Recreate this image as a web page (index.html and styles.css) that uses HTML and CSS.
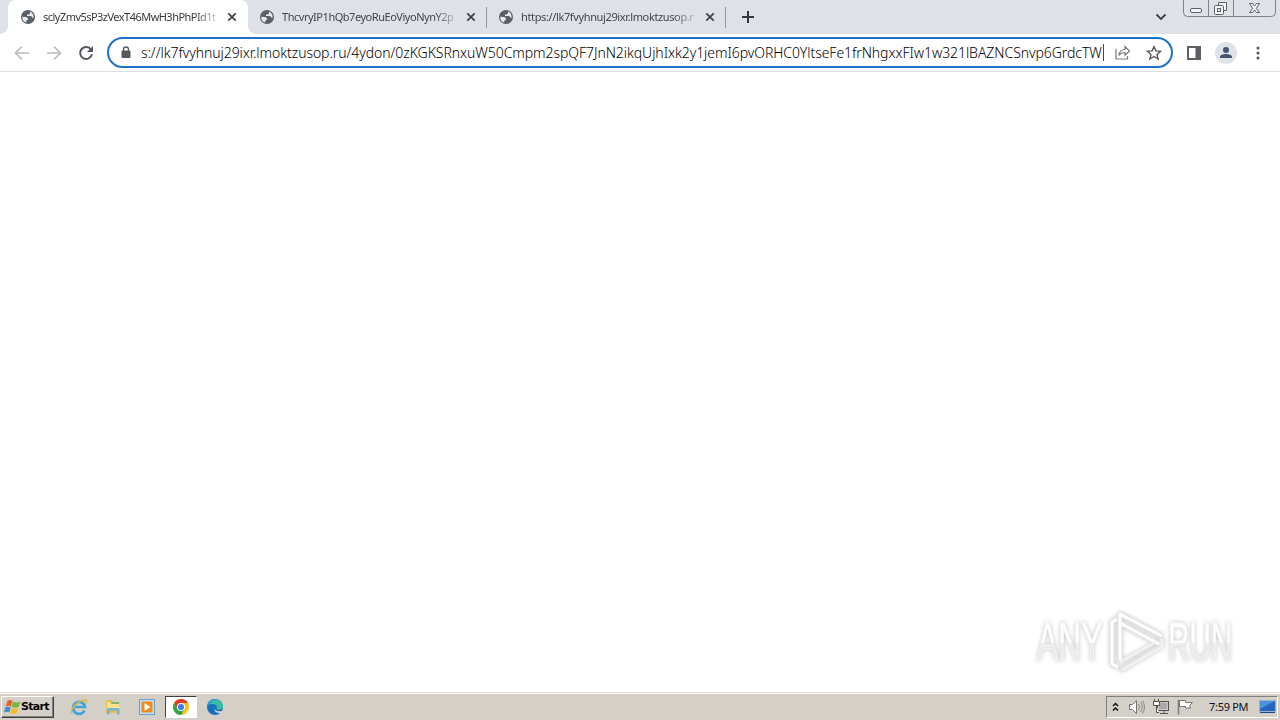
FILE: index.html
```html
<!DOCTYPE html>
<html lang="en">
<head>
  <meta charset="UTF-8">
  <title>Browser</title>
  <link rel="stylesheet" href="styles.css">
</head>
<body>
  <svg class="defs" width="0" height="0">
    <symbol id="globe" viewBox="0 0 16 16">
      <circle cx="8" cy="8" r="7" fill="#5b5f66"/>
      <path d="M2.3 7.8l3.4.2c1.8.1 2.2 1 2.2 2.500v.8H6.300v2.300C3.600 13 2 10.600 2.300 7.800zM10 2.600v1.500c0 .8-.7 1.500-1.500 1.500H7v1.500H10.300c1.300 0 2 .8 2 1.700h1.300C13.900 6 12.400 3.500 10 2.600z" fill="#e9ebee"/>
    </symbol>
    <symbol id="cross" viewBox="0 0 10 10">
      <path d="M1.300 1.300l7.400 7.400M8.700 1.300L1.300 8.700" stroke="#3c4043" stroke-width="1.700"/>
    </symbol>
  </svg>

  <header class="tabstrip">
    <div class="tab active">
      <svg class="favicon"><use href="#globe"/></svg>
      <span class="title t1">sclyZmv5sP3zVexT46MwH3hPhPId1t</span>
      <svg class="close"><use href="#cross"/></svg>
    </div>
    <div class="tab">
      <svg class="favicon"><use href="#globe"/></svg>
      <span class="title t2">ThcvryIP1hQb7eyoRuEoViyoNynY2p</span>
      <svg class="close"><use href="#cross"/></svg>
    </div>
    <div class="tab">
      <svg class="favicon"><use href="#globe"/></svg>
      <span class="title t3">https://lk7fvyhnuj29ixr.lmoktzusop.r</span>
      <svg class="close"><use href="#cross"/></svg>
    </div>
    <svg class="plus" width="12" height="12"><path d="M6 0v12M0 6h12" stroke="#33363b" stroke-width="2"/></svg>
    <svg class="chevron" width="12" height="8"><path d="M1.500 1.500L6 6l4.500-4.500" fill="none" stroke="#3c4043" stroke-width="1.800"/></svg>
    <svg class="controls" width="94" height="18" fill="none" stroke="#7f8389">
      <path d="M.5 0v12.500q0 4 4 4h84q4 0 4-4V0M25.500 0v16M50.500 0v16"/>
      <g stroke="#5d6167">
        <rect x="7.500" y="8.500" width="11" height="4" rx="1.500" fill="#f4f5f7"/>
        <path d="M35.500 5V2.500h8v8H41" fill="#f4f5f7"/>
        <rect x="31.500" y="5.500" width="9" height="9" rx="1" fill="#f4f5f7"/>
        <rect x="34.500" y="8.500" width="3" height="3"/>
        <path d="M66.500 3.500h3l2 2.500 2-2.500h3L73.300 8.300l3.200 4.200h-3l-2-2.500-2 2.500h-3l3.200-4.200z" fill="#f4f5f7"/>
      </g>
    </svg>
  </header>

  <nav class="toolbar">
    <svg class="back" width="16" height="16"><path d="M15 8H2M8 1.500L1.500 8 8 14.500" fill="none" stroke="#b9bbbe" stroke-width="1.700"/></svg>
    <svg class="forward" width="16" height="16"><path d="M1 8h13M8 1.500L14.500 8 8 14.500" fill="none" stroke="#b9bbbe" stroke-width="1.700"/></svg>
    <svg class="reload" width="16" height="16"><path d="M13.100 4.600A6 6 0 1 0 14 9.300" fill="none" stroke="#55585d" stroke-width="2"/><path d="M15 1v6H9z" fill="#55585d"/></svg>
    <div class="omnibox">
      <svg class="lock" width="10" height="13"><path d="M2.500 6V3.500a2.500 2.500 0 0 1 5 0V6" fill="none" stroke="#55585d" stroke-width="1.300"/><rect x=".5" y="4.500" width="9" height="7.500" rx="1" fill="#55585d"/></svg>
      <div class="url">s://lk7fvyhnuj29ixr.lmoktzusop.ru/4ydon/0zKGKSRnxuW50Cmpm2spQF7JnN2ikqUjhIxk2y1jemI6pvORHC0YltseFe1frNhgxxFIw1w321lBAZNCSnvp6GrdcTW</div>
      <i class="caret"></i>
      <svg class="share" width="16" height="15" fill="none" stroke="#777a7f" stroke-width="1.200"><path d="M1 4v10h11.500v-3"/><path d="M3.800 10.500c.5-4 2.700-6 6.200-6V1.500L14.500 6 10 10.300V7.500c-2.800 0-4.700.8-6.200 3z"/></svg>
      <svg class="star" width="16" height="16"><path d="M8 1.600l1.900 4.300 4.700.4-3.600 3.100 1.100 4.600L8 11.500 3.900 14 5 9.400 1.400 6.300l4.700-.4z" fill="none" stroke="#55585d" stroke-width="1.400"/></svg>
    </div>
    <svg class="panel" width="14" height="14"><path d="M0 0h14v14H0zM2 2v10h6.500V2z" fill="#5c5f64" fill-rule="evenodd"/></svg>
    <svg class="avatar" width="22" height="22"><circle cx="11" cy="11" r="11" fill="#dfe3e8"/><circle cx="11" cy="8" r="3" fill="#44546f"/><path d="M5 16v-1.200C5 12.800 9 12 11 12s6 .8 6 2.800V16z" fill="#44546f"/></svg>
    <svg class="menu" width="4" height="14" fill="#505358"><circle cx="2" cy="2" r="1.500"/><circle cx="2" cy="7" r="1.500"/><circle cx="2" cy="12" r="1.500"/></svg>
  </nav>

  <main class="page">
    <div class="watermark">
      <span class="any">ANY</span>
      <svg width="58" height="64" viewBox="0 0 58 64" fill="none" stroke-linejoin="round">
        <g stroke="#e3e3e3" stroke-width="5"><path d="M9 9L4 12v42l6 3"/><path d="M12 50V4l42 22M12 13l39 21M12 50V20M12 60l41-24V26"/></g>
        <g stroke="#fff" stroke-width="3"><path d="M9 9L4 12v42l6 3"/><path d="M12 50V4l42 22M12 13l39 21M12 50V20"/></g>
        <path d="M12 52l36-20M14 60l40-23v-8" stroke="#f1f1f1" stroke-width="3"/>
      </svg>
      <span class="run">RUN</span>
    </div>
  </main>

  <footer class="taskbar">
    <div class="start">
      <svg width="17" height="16"><path d="M3.500 2Q6 0 8.500 2L7 7.500Q4 6 1.500 7.400z" fill="#e95f2b"/><path d="M9 2.400Q12.500 4.500 16.500 2.500L14.700 8Q11 9.500 7.700 7.800z" fill="#78b83d"/><path d="M1.300 8.300Q4 7 6.700 8.400L5.300 13.500Q3 12 0 13.500z" fill="#418bd4"/><path d="M7.400 8.900Q10.500 10.500 14.500 9L13 14Q9 16 6 14z" fill="#f3bd29"/></svg>
      <b>Start</b>
    </div>
    <div class="apps">
      <div class="app"><svg width="18" height="18"><path d="M14.500 12.500A6 6 0 1 1 15 9H5" fill="none" stroke="#3fa4df" stroke-width="2.700"/><path d="M2 15.500C-1 12 8 2 15.500 2c2 .5 1 2.500.2 3.500" fill="none" stroke="#e2b63e" stroke-width="1.300"/></svg></div>
      <div class="app"><svg width="18" height="18"><path d="M2 2h6l1 2h6v11H2z" fill="#e4bd50"/><path d="M3 4h12v8H3z" fill="#f8e390"/><path d="M7 5h8" stroke="#58a46b" stroke-width="1.500"/><path d="M3 16.500v-5Q3 10 4.500 10h9.500q1.500 0 1.500 1.500v5H13v-4H5.500v4z" fill="#6fb5dc"/></svg></div>
      <div class="app"><svg width="18" height="18"><rect x="1.500" y="1.500" width="15" height="15" fill="#c5def0" stroke="#6d9fc8"/><rect x="3.500" y="3.500" width="11" height="11" rx="1" fill="#f18a1d"/><path d="M6.500 5v8l6-4z" fill="#fff"/></svg></div>
      <div class="app pressed"><svg width="16" height="16"><circle cx="8" cy="8" r="8" fill="#fbc116"/><path d="M1.070 4A8 8 0 0 1 14.930 4H8L4.540 10z" fill="#e33b2e"/><path d="M1.070 4A8 8 0 0 0 8 16l3.460-6H4.540z" fill="#2da44e"/><circle cx="8" cy="8" r="4" fill="#fff"/><circle cx="8" cy="8" r="3.100" fill="#3b7de9"/></svg></div>
      <div class="app"><svg width="18" height="18"><circle cx="9" cy="9" r="8" fill="#1670c0"/><path d="M1.200 8C3 0 16 -1 17 8c0 4-5 4.500-6.500 3 1.500-2-.5-5-4-5C4 6 2 6.500 1.200 8z" fill="#39bea4"/><path d="M1.200 8C2 3 6 0 10 1.200c-4 1-4 3-8.800 6.800z" fill="#289dd4"/><path d="M9 8.500c-1.500 2 .5 5.500 6.500 4.500l1.300.5-1.300 2C11 15 7 14 9 8.500z" fill="#d6d2cb"/></svg></div>
    </div>
    <div class="tray">
      <svg class="expand" width="7" height="10"><path d="M1 4l2.500-2.500L6 4M1 8.500L3.500 6 6 8.500" fill="none" stroke="#111" stroke-width="1.500"/></svg>
      <svg width="18" height="18" fill="none" stroke="#888"><path d="M1.500 6.500h3l4-4v13l-4-4h-3z" fill="#fafafa" stroke="#77756f"/><path d="M10.500 6q2 3 0 6M12.500 4q3.500 5 0 10M14.500 2.500q4 6.500 0 13"/></svg>
      <svg width="18" height="18"><rect x="5.500" y="3.500" width="11" height="9" fill="#c9c8c5" stroke="#55544f"/><rect x="7" y="5" width="8" height="6" fill="#aaa"/><path d="M8 15.500h8M12 13v2" stroke="#555"/><path d="M2.500 1v3M6.500 1v3M1.500 3.500h6v4h-6zM4.500 7.500v7H7" fill="#f8f8f8" stroke="#55544f"/></svg>
      <svg width="18" height="18"><path d="M2.500 2v14.500" stroke="#777" stroke-width="1.500"/><path d="M3.500 2.500h6v2h7l-3 3 1 2.500H9.500V8.500h-6z" fill="#fff" stroke="#777"/></svg>
      <span class="clock">7:59 PM</span>
      <svg class="desktop" width="17" height="15"><rect x=".5" y="1.500" width="16" height="11" fill="#2466bd" stroke="#95afd1"/><path d="M1 2h15L1 10z" fill="#4e91dc"/><path d="M1 13.500h15" stroke="#1b4682"/></svg>
    </div>
  </footer>
</body>
</html>
```
FILE: styles.css
```css
* {
  box-sizing: border-box;
}
body {
  margin: 0;
  width: 1280px;
  height: 720px;
  overflow: hidden;
  display: flex;
  flex-direction: column;
  background: #fff;
  font-family: "Noto Sans", "DejaVu Sans", sans-serif;
}
svg {
  display: block;
  flex: none;
}
.defs {
  position: absolute;
}
.tabstrip {
  height: 34px;
  flex: none;
  display: flex;
  align-items: flex-start;
  background: #dee1e6;
  padding-left: 8px;
}
.tab {
  width: 239px;
  height: 34px;
  display: flex;
  align-items: center;
  padding: 0 10px 0 11px;
  color: #42464c;
  position: relative;
}
.tab.active {
  width: 240px;
  padding-left: 12px;
  background: #fff;
  border-radius: 8px 8px 0 0;
  color: #35383d;
}
.tab.active::before,
.tab.active::after {
  content: "";
  position: absolute;
  bottom: 0;
  left: -8px;
  width: 8px;
  height: 8px;
  background: radial-gradient(circle at 0 0, transparent 7.5px, #fff 8px);
}
.tab.active::after {
  left: auto;
  right: -8px;
  transform: scaleX(-1);
}
.tab:not(.active) {
  border-right: 1px solid transparent;
  border-image: linear-gradient(transparent 8px, #92969d 8px, #92969d 27px, transparent 27px) 1;
}
.favicon {
  width: 16px;
  height: 16px;
}
.title {
  width: 178px;
  margin-left: 7px;
  white-space: nowrap;
  font-size: 11px;
  line-height: 16px;
  -webkit-mask-image: linear-gradient(90deg, #000 152px, transparent 180px);
  mask-image: linear-gradient(90deg, #000 152px, transparent 180px);
}
.t1 {
  width: 177px;
  letter-spacing: -.53px;
}
.t2 {
  letter-spacing: -.47px;
}
.t3 {
  letter-spacing: -.37px;
}
.close {
  width: 10px;
  height: 10px;
  margin-left: 7px;
}
.plus {
  margin: 11px 0 0 16px;
}
.chevron {
  margin: 13px 16px 0 auto;
}
.controls {
  margin-right: 3px;
}
.toolbar {
  height: 38px;
  flex: none;
  display: flex;
  align-items: center;
  padding: 0 20px 0 14px;
  border-bottom: 1px solid #dcdddf;
}
.forward,
.reload {
  margin-left: 16px;
}
.omnibox {
  width: 1066px;
  height: 31px;
  margin-left: 13px;
  display: flex;
  align-items: center;
  border: 2px solid #1d6fcb;
  border-radius: 16px;
}
.lock {
  margin-left: 12px;
}
.url {
  width: 962px;
  margin-left: 10px;
  white-space: nowrap;
  font-size: 14px;
  font-weight: 300;
  line-height: 20px;
  letter-spacing: -.065px;
  color: #000;
}
.caret {
  width: 1px;
  height: 17px;
  background: #444;
}
.share {
  margin-left: 11px;
}
.star {
  margin-left: 15px;
}
.panel {
  margin-left: 14px;
}
.avatar {
  margin-left: 14px;
}
.menu {
  margin-left: 19px;
}
.page {
  flex: 1;
  display: flex;
  justify-content: flex-end;
  align-items: flex-end;
  padding: 0 45px 18px 0;
}
.watermark {
  display: flex;
  align-items: center;
  filter: drop-shadow(0 0 2px #c4c4c4);
}
.watermark span {
  width: 116px;
  font: 53px/62px "Liberation Sans", sans-serif;
  color: transparent;
  background: linear-gradient(#fff 52%, #ebebeb 52%);
  -webkit-background-clip: text;
  background-clip: text;
  -webkit-text-stroke: 1px #f4f4f4;
  transform-origin: left;
}
.watermark .any {
  margin-right: -52px;
  transform: scaleX(.6);
}
.watermark .run {
  margin-right: -49px;
  transform: scaleX(.56);
}
.watermark svg {
  margin: 0 2px 0 7px;
}
.taskbar {
  height: 28px;
  flex: none;
  display: flex;
  align-items: center;
  padding: 2px 2px 2px 1px;
  background: #d4d0c8;
  border-top: 1px solid #dedbd5;
  box-shadow: inset 0 1px #fff;
}
.start {
  width: 53px;
  height: 22px;
  display: flex;
  align-items: center;
  padding-left: 2px;
  border: 1px solid;
  border-color: #fff #404040 #404040 #fff;
  box-shadow: inset -1px -1px #808080;
}
.start b {
  font: bold 11px/16px "DejaVu Sans", sans-serif;
  letter-spacing: -.7px;
  color: #000;
}
.apps {
  display: flex;
  margin-left: 8px;
}
.app {
  width: 34px;
  height: 22px;
  display: flex;
  align-items: center;
  justify-content: center;
}
.pressed {
  width: 32px;
  margin: 0 1px;
  background: #fff;
  border: 1px solid;
  border-color: #404040 #fff #fff #404040;
}
.tray {
  width: 172px;
  height: 22px;
  margin-left: auto;
  display: flex;
  align-items: center;
  gap: 6px;
  padding-left: 5px;
  border: 1px solid;
  border-color: #808080 #fff #fff #808080;
}
.tray .expand {
  margin-right: 3px;
}
.clock {
  margin-left: 9px;
  width: 40px;
  white-space: nowrap;
  font-size: 11px;
  line-height: 16px;
  letter-spacing: -.3px;
  color: #111;
}
.desktop {
  margin-left: 4px;
}
```
